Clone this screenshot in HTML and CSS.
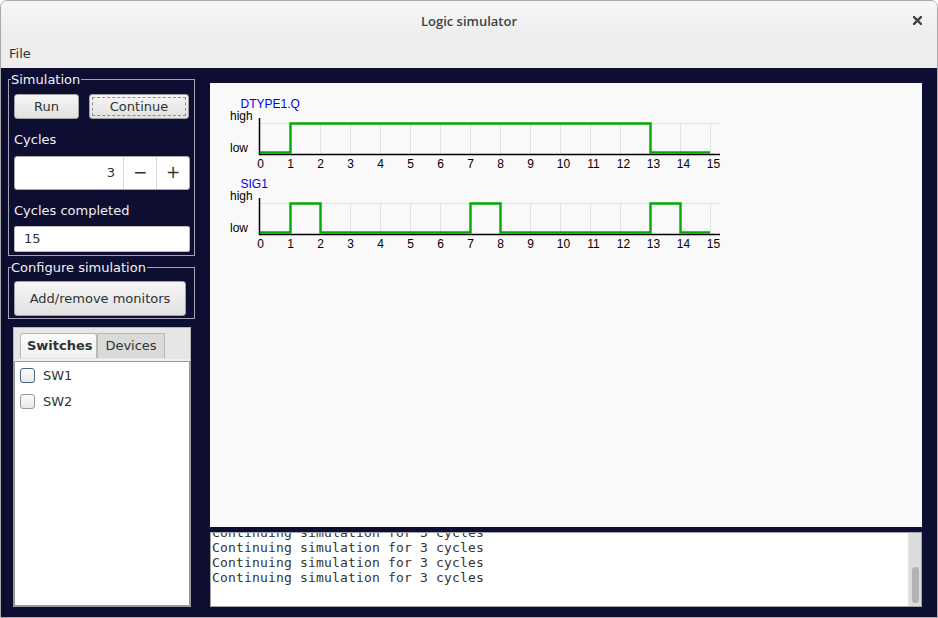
FILE: index.html
```html
<!DOCTYPE html>
<html>
<head>
<meta charset="utf-8">
<title>Logic simulator</title>
<link rel="stylesheet" href="styles.css">
</head>
<body>
<div class="window">
  <div class="titlebar">
    <span class="title">Logic simulator</span>
    <span class="close">
      <svg width="9" height="9" viewBox="0 0 9 9"><path d="M1 1 L8 8 M8 1 L1 8" stroke="#3d4447" stroke-width="2.4" stroke-linecap="square"/></svg>
    </span>
  </div>
  <div class="menubar"><span class="menu-item">File</span></div>
  <div class="main">
    <div class="left">
      <fieldset class="group sim">
        <legend>Simulation</legend>
        <div class="btn-row">
          <button class="btn run">Run</button>
          <button class="btn cont"><span class="focus">Continue</span></button>
        </div>
        <div class="lbl">Cycles</div>
        <div class="spin">
          <span class="spin-val">3</span>
          <span class="spin-btn">−</span>
          <span class="spin-btn">+</span>
        </div>
        <div class="lbl">Cycles completed</div>
        <div class="entry">15</div>
      </fieldset>
      <fieldset class="group cfg">
        <legend>Configure simulation</legend>
        <button class="btn wide">Add/remove monitors</button>
      </fieldset>
      <div class="notebook">
        <div class="tabs">
          <span class="tab active">Switches</span>
          <span class="tab">Devices</span>
        </div>
        <div class="tab-strip"></div>
        <div class="page">
          <label class="check"><span class="box focused"></span>SW1</label>
          <label class="check"><span class="box"></span>SW2</label>
        </div>
      </div>
    </div>
    <div class="right">
      <div class="plot">
        <svg class="chart" width="712" height="180" viewBox="0 0 712 180">
          <g class="grid" stroke="#e2e2e2" stroke-width="1">
            <line x1="50" y1="40.5" x2="510" y2="40.5"/>
            <line x1="80.5" y1="40" x2="80.5" y2="71"/><line x1="110.5" y1="40" x2="110.5" y2="71"/><line x1="140.5" y1="40" x2="140.5" y2="71"/><line x1="170.5" y1="40" x2="170.5" y2="71"/><line x1="200.5" y1="40" x2="200.5" y2="71"/><line x1="230.5" y1="40" x2="230.5" y2="71"/><line x1="260.5" y1="40" x2="260.5" y2="71"/><line x1="290.5" y1="40" x2="290.5" y2="71"/><line x1="320.5" y1="40" x2="320.5" y2="71"/><line x1="350.5" y1="40" x2="350.5" y2="71"/><line x1="380.5" y1="40" x2="380.5" y2="71"/><line x1="410.5" y1="40" x2="410.5" y2="71"/><line x1="440.5" y1="40" x2="440.5" y2="71"/><line x1="470.5" y1="40" x2="470.5" y2="71"/><line x1="500.5" y1="40" x2="500.5" y2="71"/>
            <line x1="50" y1="120.5" x2="510" y2="120.5"/>
            <line x1="80.5" y1="120" x2="80.5" y2="151"/><line x1="110.5" y1="120" x2="110.5" y2="151"/><line x1="140.5" y1="120" x2="140.5" y2="151"/><line x1="170.5" y1="120" x2="170.5" y2="151"/><line x1="200.5" y1="120" x2="200.5" y2="151"/><line x1="230.5" y1="120" x2="230.5" y2="151"/><line x1="260.5" y1="120" x2="260.5" y2="151"/><line x1="290.5" y1="120" x2="290.5" y2="151"/><line x1="320.5" y1="120" x2="320.5" y2="151"/><line x1="350.5" y1="120" x2="350.5" y2="151"/><line x1="380.5" y1="120" x2="380.5" y2="151"/><line x1="410.5" y1="120" x2="410.5" y2="151"/><line x1="440.5" y1="120" x2="440.5" y2="151"/><line x1="470.5" y1="120" x2="470.5" y2="151"/><line x1="500.5" y1="120" x2="500.5" y2="151"/>
          </g>
          <g class="axes" stroke="#000" stroke-width="1.5" fill="none">
            <path d="M49.5 35 V71.5 H510"/>
            <path d="M49.5 115 V151.5 H510"/>
          </g>
          <g class="sig" stroke="#00aa00" stroke-width="2.4" fill="none">
            <path d="M50 69.5 H80.5 V40.5 H440.5 V69.5 H500"/>
            <path d="M50 149.5 H80.5 V120.5 H110.5 V149.5 H260.5 V120.5 H290.5 V149.5 H440.5 V120.5 H470.5 V149.5 H500"/>
          </g>
          <g class="names" fill="#0000ee">
            <text x="30.5" y="25">DTYPE1.Q</text>
            <text x="30.5" y="105">SIG1</text>
          </g>
          <g class="levels" fill="#000">
            <text x="20" y="37">high</text>
            <text x="20" y="69">low</text>
            <text x="20" y="117">high</text>
            <text x="20" y="149">low</text>
          </g>
          <g class="ticks" fill="#000" text-anchor="middle">
            <text x="50.5" y="85">0</text><text x="80.5" y="85">1</text><text x="110.5" y="85">2</text><text x="140.5" y="85">3</text><text x="170.5" y="85">4</text><text x="200.5" y="85">5</text><text x="230.5" y="85">6</text><text x="260.5" y="85">7</text><text x="290.5" y="85">8</text><text x="320.5" y="85">9</text><text x="353.5" y="85">10</text><text x="383.5" y="85">11</text><text x="413.5" y="85">12</text><text x="443.5" y="85">13</text><text x="473.5" y="85">14</text><text x="503.5" y="85">15</text>
            <text x="50.5" y="165">0</text><text x="80.5" y="165">1</text><text x="110.5" y="165">2</text><text x="140.5" y="165">3</text><text x="170.5" y="165">4</text><text x="200.5" y="165">5</text><text x="230.5" y="165">6</text><text x="260.5" y="165">7</text><text x="290.5" y="165">8</text><text x="320.5" y="165">9</text><text x="353.5" y="165">10</text><text x="383.5" y="165">11</text><text x="413.5" y="165">12</text><text x="443.5" y="165">13</text><text x="473.5" y="165">14</text><text x="503.5" y="165">15</text>
          </g>
        </svg>
      </div>
      <div class="log">
        <div class="log-text">
          <div class="log-inner">
            <div>Continuing simulation for 3 cycles</div>
            <div>Continuing simulation for 3 cycles</div>
            <div>Continuing simulation for 3 cycles</div>
            <div>Continuing simulation for 3 cycles</div>
          </div>
        </div>
        <div class="scrollbar"><div class="thumb"></div></div>
      </div>
    </div>
  </div>
</div>
</body>
</html>
```

FILE: styles.css
```css
* { box-sizing: border-box; }
html, body { margin: 0; padding: 0; background: #ffffff; }
body { width: 938px; height: 618px; overflow: hidden; font-family: "DejaVu Sans", sans-serif; font-size: 13px; color: #2e3436; }

.window {
  width: 938px; height: 618px;
  border: 1px solid #a9a9a9;
  border-radius: 7px 7px 0 0;
  overflow: hidden;
  display: flex; flex-direction: column;
  background: #ededed;
}

.titlebar {
  height: 39px; flex: none;
  display: flex; align-items: center; justify-content: center;
  position: relative;
  background: linear-gradient(#f7f7f7, #ececec);
}
.title { font-family: "Open Sans", sans-serif; font-weight: 600; font-size: 13px; color: #3d4447; margin-top: 1px; }
.close { position: absolute; right: 15px; top: 15px; width: 9px; height: 9px; display: flex; }

.menubar { height: 28px; flex: none; display: flex; align-items: center; padding-left: 8px; background: #ededed; }
.menu-item { font-size: 13px; color: #2e3436; padding-bottom: 1px; }

.main {
  flex: 1; display: flex;
  background: #0e0e33;
  padding: 0 15px 10px 7px;
}

.left { width: 187px; flex: none; display: flex; flex-direction: column; padding-top: 4px; }

.group {
  margin: 0; border: 1px solid #a3a3b3;
  padding: 7px 4px 3px 5px;
  min-width: 0;
}
.group legend { color: #f2f2f2; font-size: 13px; line-height: 15px; padding: 0 1px 0 0; margin-left: -3px; }
.cfg { margin-top: 4px; padding-top: 6px; padding-bottom: 2px; padding-right: 6px; }

.btn {
  font-family: "DejaVu Sans", sans-serif; font-size: 13px; color: #2e3436;
  background: linear-gradient(#f6f6f6, #e1e1e1);
  border: 1px solid #a1a1a1; border-radius: 3px;
  height: 25px; padding: 0; margin: 0;
  display: flex; align-items: center; justify-content: center;
}
.btn-row { display: flex; gap: 10px; }
.run { width: 65px; }
.cont { width: 100px; padding: 2px; }
.focus { flex: 1; align-self: stretch; border: 1px dashed #8c8c8c; display: flex; align-items: center; justify-content: center; border-radius: 1px; }
.wide { width: 172px; height: 35px; }

.lbl { color: #f0f0f0; font-size: 13px; line-height: 15px; margin-top: 13px; }

.spin {
  margin-top: 9px; height: 34px;
  display: flex; background: #fff;
  border: 1px solid #a8a8a8; border-radius: 3px;
}
.spin-val { flex: 1; text-align: right; padding-right: 8px; line-height: 32px; font-size: 13px; color: #2e3436; }
.spin-btn { width: 33px; border-left: 1px solid #d8d8d8; text-align: center; line-height: 31px; font-size: 17px; color: #2e3436; }

.entry { margin-top: 8px; height: 26px; background: #fff; border: 1px solid #bbb; border-radius: 2px; padding-left: 9px; line-height: 24px; font-size: 13px; color: #2e3436; }

.notebook {
  margin: 8px 4px 0 5px;
  flex: 1; display: flex; flex-direction: column;
  background: #e6e6e6;
  border: 1px solid #b5b5b5;
}
.tabs { display: flex; padding: 5px 0 0 6px; }
.tab { height: 25px; line-height: 24px; padding: 0 6px; border: 1px solid #b8b8b8; border-bottom: none; background: #dadada; font-size: 13px; color: #2e3436; width: 68px; text-align: center; }
.tab.active { background: linear-gradient(#fbfbfb, #f1f1f1); font-weight: bold; width: 77px; border-radius: 3px 3px 0 0; }
.tab-strip { height: 3px; background: #f1f1f1; border-top: 1px solid #e6e6e6; }
.page { flex: 1; background: #fff; border: 1px solid #9a9a9a; border-width: 1px 2px 2px 2px; margin: 0 -1px -1px -1px; padding: 0 0 0 5px; }
.check { display: flex; align-items: center; height: 26px; font-size: 13px; color: #2e3436; gap: 8px; }
.box { width: 15px; height: 15px; border: 1px solid #9a9a9a; border-radius: 3px; background: linear-gradient(#fbfbfb, #e8e8e8); }
.box.focused { border-color: #4a6584; }

.right { flex: 1; margin-left: 15px; padding-top: 15px; display: flex; flex-direction: column; gap: 5px; }
.plot { flex: 1; background: #f9f9f9; }
.chart { display: block; font-family: "Liberation Sans", sans-serif; font-size: 12px; }

.log { height: 75px; flex: none; background: #fff; border: 1px solid #a4a4a4; display: flex; overflow: hidden; }
.log-text { flex: 1; overflow: hidden; padding-left: 1px; }
.log-inner { margin-top: -8px; font-family: "DejaVu Sans Mono", monospace; font-size: 13px; line-height: 15px; color: #333; letter-spacing: 0.17px; }
.scrollbar { width: 13px; flex: none; background: #dcdcdc; border-left: 1px solid #e6e6e6; padding: 34px 2px 0 3px; }
.thumb { height: 36px; background: #b2b2b2; border-radius: 4px; }
```
